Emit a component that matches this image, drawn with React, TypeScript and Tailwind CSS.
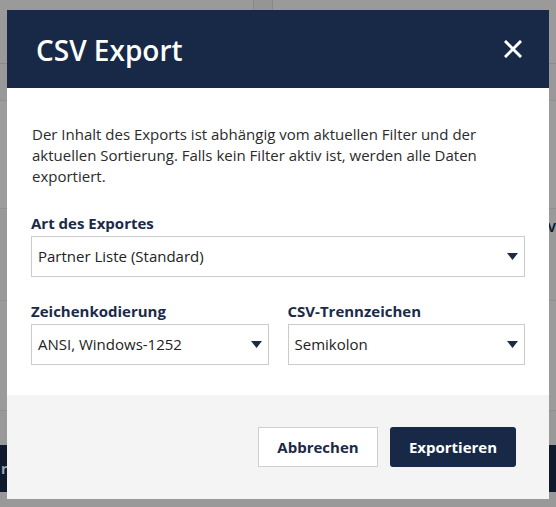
import React from "react";

const font = { fontFamily: '"Open Sans", "Noto Sans", sans-serif' };

const Caret = () => (
  <svg width="11" height="7" viewBox="0 0 11 7" className="shrink-0">
    <path d="M0 0 H11 L5.5 7 Z" fill="#1b2a47" />
  </svg>
);

interface SelectBoxProps {
  label: string;
  value: string;
}

const SelectBox = ({ label, value }: SelectBoxProps) => {
  return (
    <div className="flex flex-col">
      <div className="h-[22px] mb-[2px] text-[15px] leading-[22px] font-bold text-[#1b2a47]">{label}</div>
      <div className="h-[41px] flex items-center justify-between border border-[#cbcbcb] bg-white pl-[6px] pr-[6px]">
        <span className="text-[15px] text-[#222]">{value}</span>
        <Caret />
      </div>
    </div>
  );
};

const BackgroundPage = () => {
  return (
    <div className="absolute inset-0 flex flex-col bg-[#9a9a9a]">
      <div className="h-[64px] border-b border-[#8a8a8a] flex">
        <div className="w-[254px] h-[10px] border-r border-[#8a8a8a]" />
        <div className="w-[19px] h-[10px] border-r border-[#8a8a8a] bg-[#959595]" />
      </div>
      <div className="h-[36px] bg-[#999]" />
      <div className="h-[108px] bg-[#9c9c9c] border-t border-[#8f8f8f]" />
      <div className="h-[92px] bg-[#999] border-t border-[#8f8f8f] flex justify-end items-start">
        <span className="mt-[12px] text-[13px] leading-none font-bold text-[#0f1a2c]" style={font}>V</span>
      </div>
      <div className="h-[110px] bg-[#9b9b9b] border-t border-[#8f8f8f]" />
      <div className="h-[35px] bg-[#999] border-t border-[#8f8f8f]" />
      <div className="h-[47px] bg-[#0f1a2c] flex items-center">
        <span className="ml-[1px] text-[14px] leading-none font-bold text-[#9aa3b0]" style={font}>rt</span>
      </div>
      <div className="flex-1 bg-[#999]" />
    </div>
  );
};

export default function App() {
  return (
    <div className="relative w-[556px] h-[507px] overflow-hidden" style={font}>
      <BackgroundPage />
      <div className="absolute inset-0 pt-[10px] pl-[7px]">
        <div className="w-[542px] h-[489px] flex flex-col bg-white">
          <div className="h-[78px] shrink-0 bg-[#172946] flex items-center justify-between pl-[29px] pr-[27px]">
            <h1 className="text-[28px] font-semibold text-white leading-none pt-[2px]">CSV Export</h1>
            <svg width="18" height="18" viewBox="0 0 18 18">
              <path d="M2 2 L16 16 M16 2 L2 16" stroke="white" strokeWidth="3" strokeLinecap="square" />
            </svg>
          </div>

          <div className="flex-1 px-[24px] pt-[36px]">
            <p className="text-[15px] leading-[21px] text-[#2b2b2b] pl-[1px]">
              Der Inhalt des Exports ist abhängig vom aktuellen Filter und der aktuellen Sortierung. Falls kein
              Filter aktiv ist, werden alle Daten exportiert.
            </p>
            <div className="mt-[25px]">
              <SelectBox label="Art des Exportes" value="Partner Liste (Standard)" />
            </div>
            <div className="mt-[23px] grid grid-cols-2 gap-[19px]">
              <SelectBox label="Zeichenkodierung" value="ANSI, Windows-1252" />
              <SelectBox label="CSV-Trennzeichen" value="Semikolon" />
            </div>
          </div>

          <div className="h-[104px] shrink-0 bg-[#f4f4f4] flex items-center justify-end gap-[12px] pr-[33px]">
            <button className="w-[120px] h-[40px] bg-white border border-[#cfcfcf] text-[15px] font-bold text-[#1b2a47]">
              Abbrechen
            </button>
            <button className="w-[126px] h-[40px] bg-[#172946] rounded-[3px] text-[15px] font-bold text-white">
              Exportieren
            </button>
          </div>
        </div>
      </div>
    </div>
  );
}
